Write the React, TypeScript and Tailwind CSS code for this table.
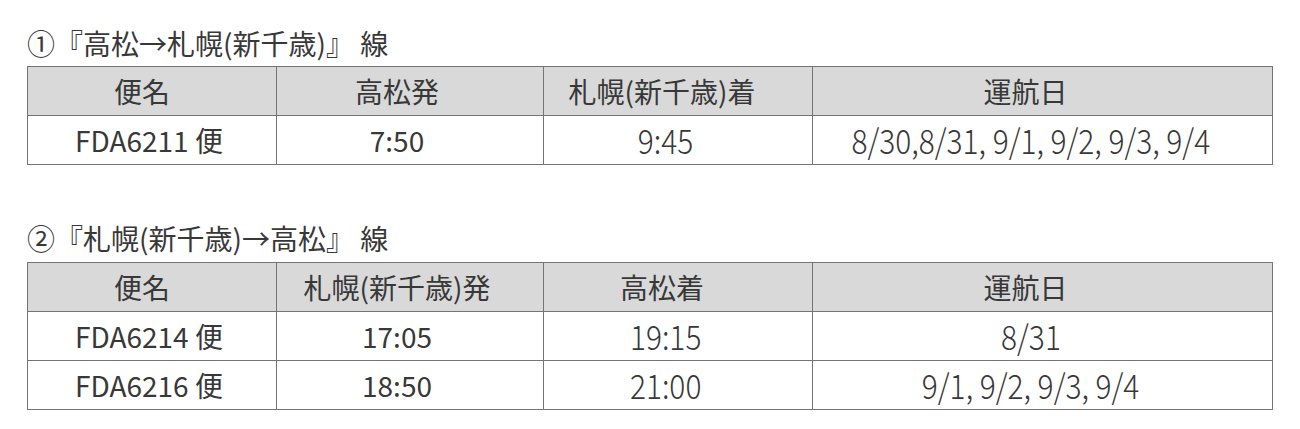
import React from "react";

type Row = string[];

const font = { fontFamily: '"Noto Sans CJK JP", "Noto Sans", sans-serif' };

// text in the source sits a little left of each column's centre
const headPad = ["pr-[20px]", "pr-[26px]", "pr-[32px]", "pr-[34px]"];
const cellPad = ["pr-[6px]", "pr-[26px]", "pr-[24px]", "pr-[24px]"];

// columns 3 and 4 of the source use tall, narrow, light digits
const Narrow: React.FC<{ children: React.ReactNode }> = ({ children }) => (
  <span className="inline-block text-[34px] font-light leading-none scale-x-[0.88]">{children}</span>
);

const FlightTable: React.FC<{ head: Row; rows: Row[] }> = ({ head, rows }) => (
  <table className="w-[1246px] border-collapse table-fixed text-[28px] text-[#383838]">
    <colgroup>
      <col className="w-[249px]" />
      <col className="w-[267px]" />
      <col className="w-[269px]" />
      <col />
    </colgroup>
    <thead>
      <tr className="bg-[#d9d9d9]">
        {head.map((h, i) => (
          <th
            key={i}
            className={`h-[49px] border border-[#747474] font-normal text-center py-0 pl-0 leading-none whitespace-nowrap ${headPad[i]}`}
          >
            {h}
          </th>
        ))}
      </tr>
    </thead>
    <tbody>
      {rows.map((r, ri) => (
        <tr key={ri} className="bg-white">
          {r.map((c, ci) => (
            <td
              key={ci}
              className={`h-[49px] border border-[#747474] text-center py-0 pl-0 leading-none whitespace-nowrap ${cellPad[ci]}`}
            >
              {ci >= 2 ? <Narrow>{c}</Narrow> : c}
            </td>
          ))}
        </tr>
      ))}
    </tbody>
  </table>
);

const App: React.FC = () => {
  return (
    <div className="w-[1300px] h-[429px] bg-white pl-[27px] pt-[25px]" style={font}>
      <h2 className="h-[36px] leading-[36px] text-[28px] text-[#383838] font-normal mb-[5px] whitespace-nowrap">
        ①『高松→札幌(新千歳)』 線
      </h2>
      <FlightTable
        head={["便名", "高松発", "札幌(新千歳)着", "運航日"]}
        rows={[["FDA6211 便", "7:50", "9:45", "8/30,8/31, 9/1, 9/2, 9/3, 9/4"]]}
      />
      <h2 className="h-[36px] leading-[36px] text-[28px] text-[#383838] font-normal mt-[55px] mb-[6px] whitespace-nowrap">
        ②『札幌(新千歳)→高松』 線
      </h2>
      <FlightTable
        head={["便名", "札幌(新千歳)発", "高松着", "運航日"]}
        rows={[
          ["FDA6214 便", "17:05", "19:15", "8/31"],
          ["FDA6216 便", "18:50", "21:00", "9/1, 9/2, 9/3, 9/4"],
        ]}
      />
    </div>
  );
};

export default App;
